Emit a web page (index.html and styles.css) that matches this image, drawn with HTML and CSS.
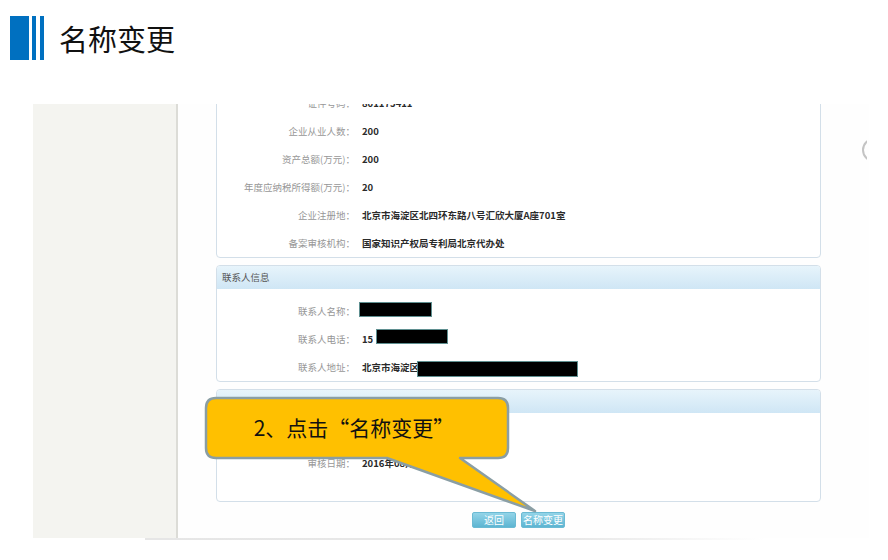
FILE: index.html
```html
<!DOCTYPE html>
<html lang="zh-CN">
<head>
<meta charset="utf-8">
<title>名称变更</title>
<link rel="stylesheet" href="styles.css">
</head>
<body>
<header class="title-bar">
  <div class="bars"><span class="bar-main"></span><span class="bar-thin"></span><span class="bar-thin"></span></div>
  <h1 class="title">名称变更</h1>
</header>

<div class="shot">
  <aside class="side"></aside>
  <main class="main">
    <section class="card card-first">
      <div class="row"><span class="lbl">证件号码：</span><span class="val">801175411</span></div>
      <div class="row"><span class="lbl">企业从业人数：</span><span class="val">200</span></div>
      <div class="row"><span class="lbl">资产总额(万元)：</span><span class="val">200</span></div>
      <div class="row"><span class="lbl">年度应纳税所得额(万元)：</span><span class="val">20</span></div>
      <div class="row"><span class="lbl">企业注册地：</span><span class="val">北京市海淀区北四环东路八号汇欣大厦A座701室</span></div>
      <div class="row"><span class="lbl">备案审核机构：</span><span class="val">国家知识产权局专利局北京代办处</span></div>
    </section>

    <section class="card">
      <div class="card-head">联系人信息</div>
      <div class="card-body">
        <div class="row"><span class="lbl">联系人名称：</span><span class="val"><span class="redact redact-name"></span></span></div>
        <div class="row"><span class="lbl">联系人电话：</span><span class="val">15<span class="redact redact-phone"></span></span></div>
        <div class="row"><span class="lbl">联系人地址：</span><span class="val">北京市海淀区<span class="redact redact-addr"></span></span></div>
      </div>
    </section>

    <section class="card card-last">
      <div class="card-head card-head-empty"></div>
      <div class="card-body">
        <div class="row"></div>
        <div class="row"><span class="lbl">审核日期：</span><span class="val">2016年08月16日</span></div>
      </div>
    </section>

    <div class="actions">
      <button class="btn">返回</button>
      <button class="btn">名称变更</button>
    </div>
  </main>
  <div class="edge-knob"><span></span></div>
</div>
<div class="shot-shadow"></div>

<svg class="callout" width="888" height="560" viewBox="0 0 888 560">
  <path d="M216,398 H498 Q508,398 508,408 V448 Q508,458 498,458 H460 L535,511 L387,458 H216 Q206,458 206,448 V408 Q206,398 216,398 Z" fill="#ffc000" stroke="#8a9ea4" stroke-width="2.5" stroke-linejoin="round"/>
  <text x="354" y="436" text-anchor="middle" class="callout-text">2、点击“名称变更”</text>
</svg>
</body>
</html>
```

FILE: styles.css
```css
* { box-sizing: border-box; }

html, body {
  margin: 0;
  padding: 0;
  background: #ffffff;
  width: 888px;
  height: 560px;
  overflow: hidden;
  font-family: "Noto Sans CJK SC", "Noto Sans", sans-serif;
}

.title-bar {
  display: flex;
  align-items: center;
  padding: 16px 0 0 10px;
  height: 60px;
}

.bars {
  display: flex;
  height: 44px;
}

.bar-main {
  width: 19px;
  height: 100%;
  background: #0070c0;
}

.bar-thin {
  width: 4px;
  height: 100%;
  background: #0070c0;
  margin-left: 4px;
}

.bar-main + .bar-thin { margin-left: 3px; }

.title {
  margin: 0 0 0 15px;
  font-size: 29px;
  font-weight: 400;
  line-height: 44px;
  color: #111;
}

.shot {
  position: relative;
  display: flex;
  margin: 44px 0 0 33px;
  width: 836px;
  height: 434px;
  overflow: hidden;
  background: #fefefe;
}

.side {
  width: 145px;
  flex: none;
  background: #f4f4f0;
  border-right: 2px solid #dcdcd7;
}

.main {
  flex: 1;
  display: flex;
  flex-direction: column;
  align-items: flex-start;
  padding-left: 38px;
}

.card {
  width: 605px;
  border: 1px solid #d3dfe9;
  border-radius: 4px;
  background: #ffffff;
  margin-top: 7px;
}

.card-first {
  margin-top: -16px;
  border-top-left-radius: 0;
  border-top-right-radius: 0;
}

.card-head {
  height: 23px;
  line-height: 23px;
  padding-left: 5px;
  font-size: 9.5px;
  color: #555;
  background: linear-gradient(#e7f4fb, #cfe6f5);
  border-radius: 3px 3px 0 0;
}

.card-body {
  padding-top: 8px;
}

.card-last .card-body {
  padding-bottom: 24px;
}

.row {
  display: flex;
  height: 28px;
  line-height: 28px;
  font-size: 9.5px;
}

.lbl {
  width: 138px;
  flex: none;
  text-align: right;
  color: #979797;
}

.val {
  margin-left: 7px;
  font-weight: 700;
  color: #2a2a2a;
  white-space: nowrap;
  display: flex;
  align-items: center;
}

.redact {
  display: inline-block;
  background: #000;
  border: 1.5px solid #5f8f90;
}

.redact-name { width: 73px; height: 15px; margin-left: -3px; margin-top: -4px; }
.redact-phone { width: 72px; height: 15px; margin-left: 3px; margin-top: -5px; }
.redact-addr { width: 161px; height: 16px; margin-left: -2px; margin-top: 3px; }

.actions {
  width: 605px;
  display: flex;
  justify-content: center;
  gap: 5px;
  margin-top: 10px;
}

.btn {
  width: 44px;
  height: 16px;
  padding: 0;
  border: 1px solid #6bbad3;
  border-radius: 2px;
  background: linear-gradient(#93d4e8, #5db5d2);
  color: #ffffff;
  font-family: "Noto Sans CJK SC", sans-serif;
  font-size: 10px;
  line-height: 14px;
}

.edge-knob {
  position: absolute;
  left: 829px;
  top: 34px;
  width: 5px;
  height: 24px;
  overflow: hidden;
}

.edge-knob span {
  display: block;
  width: 24px;
  height: 24px;
  border-radius: 50%;
  border: 2px solid #c4c4c4;
}

.shot-shadow {
  margin-left: 145px;
  width: 620px;
  height: 2px;
  background: linear-gradient(90deg, #e6e6e6 0%, #e8e8e8 70%, rgba(235,235,235,0) 100%);
}

.callout {
  position: absolute;
  left: 0;
  top: 0;
  pointer-events: none;
}

.callout-text {
  font-family: "Noto Sans CJK SC", sans-serif;
  font-size: 21px;
  fill: #111;
}
```
